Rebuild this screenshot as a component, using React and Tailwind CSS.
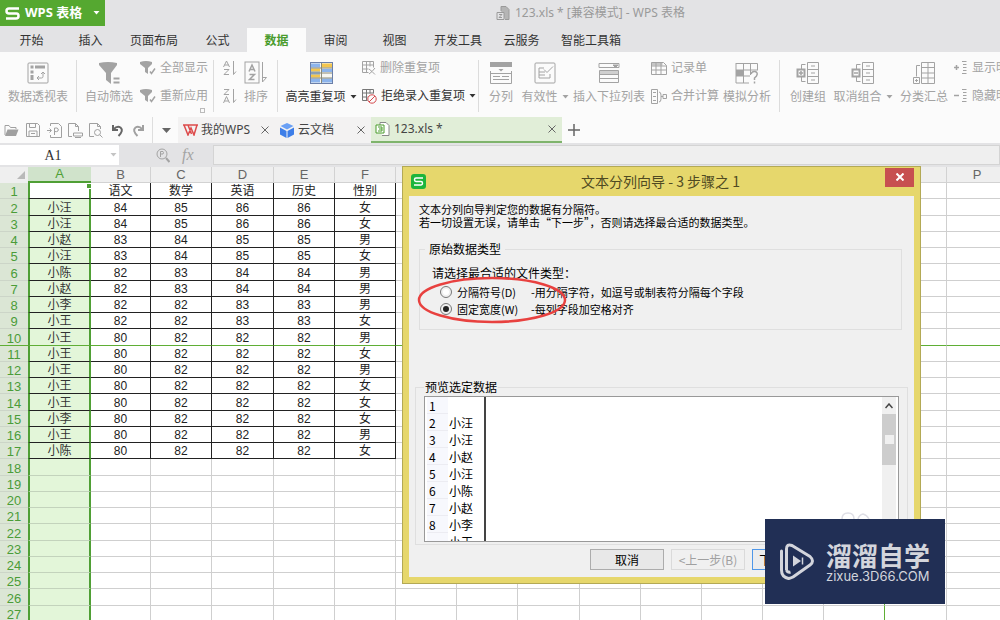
import React from "react";
import clsx from "clsx";

const MENU = ["开始", "插入", "页面布局", "公式", "数据", "审阅", "视图", "开发工具", "云服务", "智能工具箱"];

const COLUMNS = [
	{ name: "A", width: "w-[63px]" },
	{ name: "B", width: "w-[60px]" },
	{ name: "C", width: "w-[61px]" },
	{ name: "D", width: "w-[62px]" },
	{ name: "E", width: "w-[61px]" },
	{ name: "F", width: "w-[61px]" },
	{ name: "G", width: "w-[61px]" },
	{ name: "H", width: "w-[61px]" },
	{ name: "I", width: "w-[62px]" },
	{ name: "J", width: "w-[61px]" },
	{ name: "K", width: "w-[61px]" },
	{ name: "L", width: "w-[61px]" },
	{ name: "M", width: "w-[61px]" },
	{ name: "N", width: "w-[61px]" },
	{ name: "O", width: "w-[62px]" },
	{ name: "P", width: "w-[61px]" },
];

const DATA = [
	["", "语文", "数学", "英语", "历史", "性别"],
	["小汪", 84, 85, 86, 86, "女"],
	["小汪", 84, 85, 86, 86, "女"],
	["小赵", 83, 84, 85, 85, "男"],
	["小汪", 83, 84, 85, 85, "女"],
	["小陈", 82, 83, 84, 84, "男"],
	["小赵", 82, 83, 84, 84, "男"],
	["小李", 82, 82, 83, 83, "男"],
	["小王", 82, 82, 83, 83, "女"],
	["小王", 80, 82, 82, 82, "男"],
	["小王", 80, 82, 82, 82, "女"],
	["小王", 80, 82, 82, 82, "男"],
	["小王", 80, 82, 82, 82, "女"],
	["小王", 80, 82, 82, 82, "女"],
	["小李", 80, 82, 82, 82, "女"],
	["小王", 80, 82, 82, 82, "男"],
	["小陈", 80, 82, 82, 82, "女"],
];

const ROWS = Array.from({ length: 27 }, (_, i) => i + 1);

const Svg = ({ w, h, className, children }) => (
	<svg width={w} height={h} viewBox={`0 0 ${w} ${h}`} fill="none" stroke="currentColor" className={clsx("shrink-0", className)} aria-hidden="true">
		{children}
	</svg>
);

const Caret = ({ className }) => (
	<Svg w={7} h={4} className={className}>
		<path d="M0.5 0h6L3.5 3.5z" fill="currentColor" stroke="none" />
	</Svg>
);

const PivotIcon = () => (
	<Svg w={22} h={22}>
		<rect x="1" y="1" width="20" height="20" rx="1" />
		<path d="M3.5 5h3M8 5h10" strokeWidth="3" />
		<path d="M5 8.500v3M5 13v5" strokeWidth="3" />
		<path d="M10 16h4.500q1.500 0 1.500-1.500v-4M12 14l-2 2 2 2M14 12l2-2 2 2" />
	</Svg>
);

const FilterIcon = () => (
	<Svg w={22} h={22}>
		<path d="M1 1q9-2 18 0v2l-6 8v11l-5-4v-7L1 3z" fill="currentColor" stroke="none" />
		<path d="M15.500 16.500h6M15.500 20.500h6" strokeWidth="2" />
	</Svg>
);

const SmallFilterIcon = () => (
	<Svg w={16} h={14}>
		<path d="M0 1q6-2 12 0v2L8 7v6l-3-2V7L0 3z" fill="currentColor" stroke="none" />
		<path d="M10 10.500l1.500 2 3.500-5" strokeWidth="1.500" />
	</Svg>
);

const SortIcon = ({ desc }) => (
	<Svg w={16} h={16}>
		<path d={desc ? "M2 1.500h5l-5 5h5M1.500 15L4.500 8.500 7.500 15M2.500 13h4" : "M1.500 7L4.500 1l3 6M2.500 5h4M2 9.500h5l-5 5h5"} />
		<path d="M11.500 1v13.500l2.500-3" />
	</Svg>
);

const SortBoxIcon = () => (
	<Svg w={24} h={24}>
		<rect x="1" y="1" width="14" height="21" />
		<path d="M5 10.500L8 4l3 6.500M6 8.500h4M5.500 13.500h5l-5 5h5" strokeWidth="1.500" />
		<path d="M18.500 1v20l4-4.500h-4" />
	</Svg>
);

const HighlightIcon = () => (
	<Svg w={23} h={22}>
		<rect x="0.500" y="0.500" width="22" height="21" fill="#f7f7f2" stroke="#6b7fa8" />
		<path d="M1 3.500h9M12 18.500h10M1 18.500h9" stroke="#8cb4ec" strokeWidth="4" />
		<path d="M12 3.500h10M1 8.500h9M1 13.500h9" stroke="#f3c64f" strokeWidth="4" />
		<path d="M12 8.500h10M1 11h9" stroke="#8cb4ec" strokeWidth="3" />
		<path d="M11.500 1v20M1 6h21M1 11h21M1 16h21" stroke="#8a8a78" />
	</Svg>
);

const DedupIcon = () => (
	<Svg w={14} h={14}>
		<path d="M.5.500h11v6M.5.500v11h6M.5 4h11M.5 8h6M4.500.500v11M8 .5v5" />
		<path d="M7 8l3 2.500L7 13M13 7l-3 3.500 3 3" />
	</Svg>
);

const RejectIcon = () => (
	<Svg w={15} h={15}>
		<path d="M.5.500h11v4M.5.500v11h5M.5 4h11M.5 8h5M4.500.500v11M8 .5v4" stroke="#777" />
		<circle cx="10" cy="10" r="4.200" stroke="#d4494d" fill="#fbfbfb" />
		<path d="M7 13l6-6" stroke="#d4494d" />
	</Svg>
);

const SplitIcon = () => (
	<Svg w={22} h={22}>
		<path d="M0 2.500h22" strokeWidth="5" />
		<path d="M8.500 7h5L11 9.500z" fill="currentColor" stroke="none" />
		<path d="M.5 11.500h21v10H.5zM3 14.500h7M12 14.500h7M3 17.500h16M.5 9v3M21.500 9v3" />
	</Svg>
);

const ValidIcon = () => (
	<Svg w={22} h={22}>
		<rect x="1" y="1" width="20" height="20" rx="1" />
		<path d="M5 6h5M5 6v4h6M5 10v6h11M5 13h6M16 12v4M10 7.500l3 3 6-6" />
	</Svg>
);

const DropListIcon = () => (
	<Svg w={22} h={22}>
		<path d="M1 1.500h20v4M1 1.500v4h20" />
		<path d="M15 3h5l-2.500 2.500z" fill="currentColor" />
		<path d="M1.500 8.500h19v12h-19zM1.500 16.500h19M1.500 12.500h19" />
		<path d="M1.500 10.500h19" strokeWidth="3" opacity=".5" />
	</Svg>
);

const RecordIcon = () => (
	<Svg w={16} h={13}>
		<path d="M.5.500h12l3 3v9H.5zM.5 4h15M.5 8h15M5 .5v12M10 .5v12" />
		<path d="M.5 2h11" strokeWidth="3" opacity=".6" />
	</Svg>
);

const MergeIcon = () => (
	<Svg w={16} h={15}>
		<path d="M.5.500h6v14h-6zM2 3.500h3M2 7.500h3M2 11.500h3M8 3q2 0 2 3v4q0 3-2 3M10 7.500h2M12 5.500h3.500v4H12z" />
	</Svg>
);

const WhatIfIcon = () => (
	<Svg w={24} h={22}>
		<path d="M1 1.500h21.500v7M1 1v20h13M1 8h21M1 14h14M8.500 1v20M15.500 1v12" />
		<path d="M1 11h8" strokeWidth="6" />
		<path d="M16 12q1-3 4-2.500 3.500 1 1.500 4.500l-2 2v2M19.500 19.500v2" strokeWidth="1.500" />
	</Svg>
);

const GroupIcon = ({ minus }) => (
	<Svg w={24} h={22}>
		<path d="M11.500.500h11v21h-11zM11.500 7.500h11M11.500 14.500h11M15 4h4M15 11h4M15 18h4" />
		<path d="M9.500 2.500h-4v5M5.500 14v5.500h4" />
		<rect x="1.500" y="7.500" width="7" height="7" strokeWidth="2" />
		<path d={minus ? "M3 11h4" : "M3 11h4M5 9v4"} strokeWidth="1.500" />
	</Svg>
);

const SubtotalIcon = () => (
	<Svg w={24} h={22}>
		<path d="M9.500.500h13v21h-13zM9.500 5.500h13M9.500 11h13M9.500 16h13M16 .5v21" />
		<path d="M8 3.500H4.500v11M1.500 15.500h6v6h-6zM3 18.500h3M4.500 17v3" />
	</Svg>
);

const DetailIcon = ({ minus }) => (
	<Svg w={14} h={14}>
		<path d={minus ? "M0 6.500h5" : "M0 6.500h5M2.500 4v5"} strokeWidth="1.500" />
		<path d="M8 .5h4.500M9 3.500h3.500M9 6.500h3.500M9 9.500h3.500M8 12.500h4.500" />
	</Svg>
);

const BigTool = ({ icon, label, caret, dark, className }) => (
	<button type="button" className={clsx("flex flex-col items-center gap-1 whitespace-nowrap pt-px", dark ? "text-[#333]" : "text-[#a3a3a3]", className)}>
		<span className="flex h-6 items-center">{icon}</span>
		<span className="flex items-center gap-1 leading-4">
			{label}
			{caret && <Caret />}
		</span>
	</button>
);

const SmallTool = ({ icon, label, caret, dark }) => (
	<button type="button" className={clsx("flex h-4 items-center gap-1 whitespace-nowrap leading-4", dark ? "text-[#333]" : "text-[#a3a3a3]")}>
		{icon}
		{label}
		{caret && <Caret />}
	</button>
);

const Stack = ({ className, children }) => <div className={clsx("flex flex-col gap-3", className)}>{children}</div>;

const Ribbon = () => (
	<div className="flex h-[65px] shrink-0 overflow-hidden bg-[#fbfbfb] pt-2 text-[12px]">
		<div className="w-[77px] shrink-0 h-13 border-r border-[#dcdcdc]">
			<BigTool icon={<PivotIcon />} label="数据透视表" className="w-[76px]" />
		</div>
		<div className="relative flex w-[137px] shrink-0 h-13 border-r border-[#dcdcdc] pl-2">
			<BigTool icon={<FilterIcon />} label="自动筛选" className="w-12" />
			<Stack className="ml-[7px]">
				<SmallTool icon={<SmallFilterIcon />} label="全部显示" />
				<SmallTool icon={<SmallFilterIcon />} label="重新应用" />
			</Stack>
			<span className="absolute right-2 -bottom-px size-[5px] border border-[#bbb]" />
		</div>
		<div className="flex w-[64px] shrink-0 h-13 border-r border-[#dcdcdc] pl-2 text-[#a3a3a3]">
			<Stack>
				<button type="button" aria-label="升序"><SortIcon /></button>
				<button type="button" aria-label="降序"><SortIcon desc /></button>
			</Stack>
			<BigTool icon={<SortBoxIcon />} label="排序" className="w-9" />
		</div>
		<div className="flex w-[201px] shrink-0 h-13 border-r border-[#dcdcdc] pl-2">
			<BigTool icon={<HighlightIcon />} label="高亮重复项" caret dark className="w-[70px]" />
			<Stack className="ml-[6px]">
				<SmallTool icon={<DedupIcon />} label="删除重复项" />
				<SmallTool icon={<RejectIcon />} label="拒绝录入重复项" caret dark />
			</Stack>
		</div>
		<div className="flex w-[301px] shrink-0 h-13 border-r border-[#dcdcdc] pl-[10px]">
			<BigTool icon={<SplitIcon />} label="分列" className="w-6" />
			<BigTool icon={<ValidIcon />} label="有效性" caret className="ml-2 w-12" />
			<BigTool icon={<DropListIcon />} label="插入下拉列表" className="ml-1 w-[72px]" />
			<Stack className="ml-[6px]">
				<SmallTool icon={<RecordIcon />} label="记录单" />
				<SmallTool icon={<MergeIcon />} label="合并计算" />
			</Stack>
			<BigTool icon={<WhatIfIcon />} label="模拟分析" className="ml-1 w-12" />
		</div>
		<div className="flex shrink-0 h-13 pl-2">
			<BigTool icon={<GroupIcon />} label="创建组" className="ml-[2px] w-9" />
			<BigTool icon={<GroupIcon minus />} label="取消组合" caret className="ml-2 w-[58px]" />
			<BigTool icon={<SubtotalIcon />} label="分类汇总" className="ml-2 w-12" />
			<Stack className="ml-[6px]">
				<SmallTool icon={<DetailIcon />} label="显示明细数据" />
				<SmallTool icon={<DetailIcon minus />} label="隐藏明细数据" />
			</Stack>
		</div>
	</div>
);

const TitleBar = () => (
	<header className="flex h-[26px] shrink-0 text-[12px]">
		<button type="button" className="flex w-[105px] items-center bg-[#55a830] pl-[5px] text-[13px] font-bold text-white">
			<Svg w={15} h={13}>
				<path d="M14 1.500H4Q1.500 1.500 1.500 4t2.500 2.500h7.500Q13.500 6.500 13.500 9t-2.500 2.500H1" strokeWidth="2.500" />
			</Svg>
			<span className="ml-[5px] whitespace-nowrap">WPS 表格</span>
			<Caret className="ml-[11px]" />
		</button>
		<div className="flex flex-1 items-center justify-center gap-[5px] pl-[76px] text-[#9a9a9a]">
			<Svg w={14} h={14}>
				<path d="M5 5V.5h5l3 3v10H9" fill="#b5b5b5" />
				<path d="M1 6.500h7v7H1z" fill="#e3e3e5" />
				<path d="M3 8.500h3l-3 3h3" />
			</Svg>
			123.xls * [兼容模式] - WPS 表格
		</div>
	</header>
);

const MenuBar = () => (
	<nav className="flex h-[26px] shrink-0 items-end pl-[2px] text-[12px] text-[#333]">
		{MENU.map((item) => (
			<button
				key={item}
				type="button"
				className={clsx("h-6 min-w-[59px] whitespace-nowrap px-[10px] pt-[2px]", item === "数据" && "bg-[#fbfbfb] font-bold text-[#4a9c2d]")}
			>
				{item}
			</button>
		))}
	</nav>
);

const CloseMark = ({ label }) => (
	<button type="button" aria-label={label} className="text-[#666]">
		<Svg w={8} h={8}>
			<path d="M.5.500l7 7M7.500.500l-7 7" />
		</Svg>
	</button>
);

const QuickBar = () => (
	<div className="flex h-[26px] shrink-0 bg-[#fbfbfb] text-[12px] text-[#444]">
		<div className="flex w-[178px] shrink-0 items-center pl-1 text-[#a0a0a0]">
			<button type="button" aria-label="打开" className="w-[22px]">
				<Svg w={15} h={13}>
					<path d="M1 11V1.500h4l1.500 2H12V5" />
					<path d="M3.500 5.500H14.500L12 12H1z" fill="currentColor" stroke="none" />
				</Svg>
			</button>
			<button type="button" aria-label="保存" className="w-[21px]">
				<Svg w={14} h={14}>
					<path d="M.5.500h11l2 2v11H.5zM3.500.500v4h6v-4M3 13V8h8v5M5 10.500h4" />
				</Svg>
			</button>
			<button type="button" aria-label="输出为PDF" className="w-[21px]">
				<Svg w={16} h={15}>
					<path d="M3.500 3V.5h8l3 3v11h-11V12M0 7.500h4M2.500 5.500l2 2-2 2M7.500 12V5h2.500q2 .5 1 3-1 1-3.500.500" />
				</Svg>
			</button>
			<button type="button" aria-label="打印" className="w-[21px]">
				<Svg w={15} h={15}>
					<path d="M4 13.500H.5V.5h7l3 3V8M7.500.500v3h3M5.500 10h9v3h-9zM7 14.500h6" />
				</Svg>
			</button>
			<button type="button" aria-label="打印预览" className="w-[22px]">
				<Svg w={14} h={15}>
					<path d="M5 13.500H.5V.5h8l3 3V6M8.500.500v3h3M11 12l2.500 2.500" />
					<circle cx="8.500" cy="9.500" r="3" />
				</Svg>
			</button>
			<button type="button" aria-label="撤消" className="w-[21px] text-[#666]">
				<Svg w={13} h={13}>
					<path d="M2 1v5h5M2.500 5.500Q6 1.500 9.500 3.500q3.500 3-2 8.500" strokeWidth="2" />
				</Svg>
			</button>
			<button type="button" aria-label="恢复" className="w-[18px]">
				<Svg w={13} h={13}>
					<path d="M11 1v5H6M10.500 5.500Q7 1.500 3.500 3.500q-3.500 3 2 8.500" strokeWidth="2" />
				</Svg>
			</button>
			<button type="button" aria-label="更多" className="ml-[2px] flex h-full items-center border-l border-[#dedede] pl-[9px] text-[#666]">
				<Svg w={9} h={5}>
					<path d="M0 0h9L4.500 5z" fill="currentColor" stroke="none" />
				</Svg>
			</button>
		</div>
		<div className="flex w-[97px] shrink-0 items-center bg-[#f3f2f2] pl-[5px]">
			<Svg w={15} h={12}>
				<path d="M0 1h15M1 1l4 10 3-7 3 7 3-10M5 1l3.500 9" stroke="#dd4b4b" strokeWidth="1.500" />
			</Svg>
			<span className="mr-auto ml-[3px]">我的WPS</span>
			<span className="mr-[6px] flex"><CloseMark label="关闭我的WPS" /></span>
		</div>
		<div className="flex w-[96px] shrink-0 items-center bg-[#f3f2f2] pl-[5px]">
			<Svg w={14} h={15}>
				<path d="M7 0l6.500 3L7 6.500.5 3z" fill="#6aa0f5" stroke="none" />
				<path d="M0 4.500L6.500 8v7L0 11.500zM14 4.500L7.500 8v7l6.500-3.500z" fill="#3d7ee8" stroke="none" />
			</Svg>
			<span className="mr-auto ml-1">云文档</span>
			<span className="mr-[6px] flex"><CloseMark label="关闭云文档" /></span>
		</div>
		<div className="flex w-[191px] shrink-0 items-center border-b-2 border-[#7fb46c] bg-[#e1eed8] pl-1">
			<Svg w={15} h={14}>
				<path d="M5 3V.5h6l3 3v10H7" stroke="#888" fill="#fff" />
				<path d="M1 3h8v8H1z" fill="#fff" stroke="#4a9c2d" />
				<path d="M3 5h4v2H4M3 9h4V7" stroke="#4a9c2d" />
			</Svg>
			<span className="mr-auto ml-1">123.xls *</span>
			<span className="mr-[6px] flex"><CloseMark label="关闭123.xls" /></span>
		</div>
		<button type="button" aria-label="新建" className="ml-[6px] text-[#666]">
			<Svg w={12} h={12}>
				<path d="M6 0v12M0 6h12" strokeWidth="1.500" />
			</Svg>
		</button>
	</div>
);

const FormulaBar = () => (
	<div className="flex h-6 shrink-0 items-center bg-[#e3e3e5]">
		<div className="flex h-5 w-[119px] shrink-0 items-center bg-white">
			<input aria-label="名称框" defaultValue="A1" className="w-[106px] text-center font-['Liberation_Serif',serif] text-[14px] text-[#333] outline-none" />
			<Caret className="ml-1 text-[#c4c4c4]" />
		</div>
		<div className="flex w-[94px] shrink-0 items-center gap-3 pl-[37px] text-[#a3a3a3]">
			<Svg w={14} h={15}>
				<circle cx="6" cy="6" r="5" />
				<path d="M10 10l3.500 4" strokeWidth="2" />
				<path d="M4.500 9V3.500H7q1 1 0 2.500H4.500" />
			</Svg>
			<span className="font-['Liberation_Serif',serif] text-[16px] leading-4 italic">fx</span>
		</div>
		<input aria-label="编辑栏" className="h-5 min-w-0 flex-1 border border-[#d4d4d4] bg-[#efefef] outline-none" />
	</div>
);

const Sheet = () => (
	<table className="w-max table-fixed border-separate border-spacing-0 bg-white font-['Liberation_Sans','Noto_Sans_CJK_SC',sans-serif] text-[12px]">
		<colgroup>
			<col className="w-[28px]" />
			{COLUMNS.map((col) => (
				<col key={col.name} className={col.width} />
			))}
		</colgroup>
		<thead>
			<tr className="h-4 bg-[#efefef] text-[13px] leading-[14px] text-[#666]">
				<th className="p-0">
					<Svg w={8} h={8} className="ml-[17px]">
						<path d="M8 0v8H0z" fill="#b9b9b9" stroke="none" />
					</Svg>
				</th>
				{COLUMNS.map((col) => (
					<th
						key={col.name}
						className={clsx(
							"p-0 font-normal",
							col.name === "A" ? "border-b-2 border-[#4f9f35] bg-[#d0e3cb] text-[#4f9f35]" : "border-r border-b border-[#d2d2d2]"
						)}
					>
						{col.name}
					</th>
				))}
			</tr>
		</thead>
		<tbody>
			{ROWS.map((row) => {
				const guide = row === 10;
				const filled = row <= DATA.length;
				return (
					// every fourth row is one pixel taller
					<tr key={row} className={clsx("leading-[13px]", row % 4 === 2 ? "h-[17px]" : "h-4")}>
						<th className={clsx("border-b bg-[#dbe6d5] p-0 pt-[2px] text-[13px] font-normal text-[#4a9c38]", guide ? "border-[#5fae35]" : "border-[#ccd5c8]")}>
							{row}
						</th>
						{COLUMNS.map((col, i) => {
							if (i === 0) {
								return (
									<td
										key={col.name}
										className={clsx(
											"relative border-x-2 border-b border-x-[#4f9f35] p-0 pt-[2px] text-center text-[#333]",
											row === 1 ? "bg-white" : "bg-[#e3f6d9]",
											guide ? "border-b-[#5fae35]" : filled ? "border-b-[#222]" : "border-b-[#c3d3bc]"
										)}
									>
										{filled && DATA[row - 1][0]}
										{row === 1 && <span className="absolute top-0 -right-[3px] size-[6px] border border-white bg-[#4f9f35]" />}
									</td>
								);
							}
							const black = filled && i < 6;
							return (
								<td
									key={col.name}
									className={clsx(
										"border-r border-b p-0 pt-[2px] text-center text-[#222]",
										guide ? "border-b-[#5fae35]" : black ? "border-b-[#222]" : "border-b-[#cfcfcf]",
										col.name === "N" ? "border-r-[#5fae35]" : black ? "border-r-[#222]" : "border-r-[#cfcfcf]"
									)}
								>
									{black && DATA[row - 1][i]}
								</td>
							);
						})}
					</tr>
				);
			})}
		</tbody>
	</table>
);

const DIALOG_BUTTON = "h-[21px] w-[74px] border text-[12px] leading-[17px] whitespace-nowrap overflow-hidden";

const TypeOption = ({ id, label, hint, checked }) => (
	<div className="flex h-[17px] items-center whitespace-nowrap">
		<input
			id={id}
			type="radio"
			name="type"
			defaultChecked={checked}
			className="mr-[5px] size-3 appearance-none rounded-full border border-[#777] bg-white bg-clip-content p-[2px] checked:bg-[#222]"
		/>
		<label htmlFor={id} className="flex">
			<span className="w-[74px]">{label}</span>
			<span>{hint}</span>
		</label>
	</div>
);

const SplitDialog = () => (
	<section
		role="dialog"
		aria-labelledby="wizard-title"
		className="absolute top-[166px] left-[402px] w-[519px] border border-[#b3a955] bg-[#e6d76c] px-[6px] pb-[6px] font-['Noto_Sans_CJK_SC',sans-serif] text-black"
	>
		<div className="flex h-[29px] items-center pl-[2px]">
			<Svg w={15} h={15}>
				<rect width="15" height="15" rx="3" fill="#1db53c" stroke="none" />
				<path d="M12 4H5Q3.500 4 3.500 5.700T5 7.500h5q1.500 0 1.500 1.700T10 11H3" stroke="#fff" strokeWidth="1.500" />
			</Svg>
			<h2 id="wizard-title" className="flex-1 pl-[10px] text-center text-[14px] text-[#4f4a22]">文本分列向导 - 3 步骤之 1</h2>
			<button type="button" aria-label="关闭" className="mb-[9px] flex h-[19px] w-[29px] items-center justify-center bg-[#c75050] text-white">
				<Svg w={8} h={8}>
					<path d="M.5.500l7 7M7.500.500l-7 7" strokeWidth="2" />
				</Svg>
			</button>
		</div>
		<div className="relative bg-[#f0f0f0] pt-[7px] pb-[7px] text-[12px] leading-[13px]">
			<p className="px-[10px] text-[11px]">
				文本分列向导判定您的数据有分隔符。
				<br />
				若一切设置无误，请单击“下一步”，否则请选择最合适的数据类型。
			</p>
			<fieldset className="mt-[13px] mr-3 ml-[10px] border border-[#dfdfdf] px-[5px] pb-3 text-[11px] leading-[14px]">
				<legend className="px-1 text-[12px]">原始数据类型</legend>
				<p className="mt-[10px] ml-[7px] text-[12px]">请选择最合适的文件类型：</p>
				<div className="mt-[3px] ml-[15px]">
					<TypeOption id="by-delimiter" label="分隔符号(D)" hint="-用分隔字符，如逗号或制表符分隔每个字段" />
					<TypeOption id="by-width" label="固定宽度(W)" hint="-每列字段加空格对齐" checked />
				</div>
			</fieldset>
			<fieldset className="mx-[6px] mt-[50px] border border-[#dfdfdf] px-[8px] pb-[2px]">
				<legend className="px-px leading-[14px]">预览选定数据</legend>
				<div className="mt-[2px] flex h-[146px] overflow-hidden border border-[#999] bg-white pl-[2px]">
					<div className="h-36 w-[59px] shrink-0 overflow-hidden border-r-2 border-[#444]">
						<table className="w-full table-fixed border-separate border-spacing-0">
							<tbody>
								{DATA.slice(0, 9).map(([name], i) => (
									<tr key={i} className="h-[17px]">
										<th className="w-[21px] border-b border-[#ececf2] bg-[#f7f8fd] p-0 pl-[2px] text-left font-normal">{i < 8 && i + 1}</th>
										<td className="p-0 pl-px">{name}</td>
									</tr>
								))}
							</tbody>
						</table>
					</div>
					<div className="mr-[2px] ml-auto flex w-[14px] flex-col bg-[#f0f0f0]">
						<button type="button" aria-label="向上滚动" className="flex h-[17px] shrink-0 items-center justify-center text-[#444]">
							<Svg w={8} h={6}>
								<path d="M.5 5L4 1l3.500 4" strokeWidth="1.500" />
							</Svg>
						</button>
						<div className="flex h-[51px] shrink-0 items-center justify-center bg-[#cdcdcd]">
							<span className="size-[9px] bg-[#f0f0f0]" />
						</div>
					</div>
				</div>
			</fieldset>
			<div className="mt-1 flex justify-end gap-[7px] pr-[88px]">
				<button type="button" className={clsx(DIALOG_BUTTON, "border-[#acacac] bg-[#e8e8e8]")}>取消</button>
				<button type="button" disabled className={clsx(DIALOG_BUTTON, "border-[#dadada] bg-[#f0f0f0] text-[#a0a0a0]")}>&lt;上一步(B)</button>
				<button type="button" className={clsx(DIALOG_BUTTON, "border-[#4f97e8] bg-[#ececec]")}>下一步(N)&gt;</button>
			</div>
			<svg className="pointer-events-none absolute top-[79px] left-[8px]" width="152" height="50" viewBox="0 0 152 50" fill="none" aria-hidden="true">
				<ellipse cx="75" cy="25" rx="73" ry="22" stroke="#e8413f" strokeWidth="2.500" />
			</svg>
		</div>
	</section>
);

const Watermark = () => (
	<aside className="absolute top-[519px] left-[765px] flex h-[85px] w-[180px] items-center bg-[#212f55] pl-[15px] text-[#d3d5dc]">
		<Svg w={34} h={37}>
			<path d="M1.500 8v19q0 7 7 8.500" strokeWidth="3" strokeLinecap="round" />
			<path d="M6.500 27V6q0-5.500 5.500-3.500l18 11q5 4.500 0 8.500l-17 12q-3 1.500-5 1.500M6.500 27q1 3 4 2" strokeWidth="3" strokeLinejoin="round" />
			<path d="M13 12.500l8 5.500-8 5.500z" fill="currentColor" stroke="none" />
			<path d="M22.500 14.500v7" strokeWidth="1.500" />
		</Svg>
		<div className="ml-3 whitespace-nowrap">
			<div className="font-['Noto_Sans_CJK_SC',sans-serif] text-[26px] leading-7 font-bold">溜溜自学</div>
			<div className="font-['Inter',sans-serif] text-[13px] leading-[14px]">zixue.3D66.COM</div>
		</div>
		<svg className="absolute -top-[7px] left-[75px]" width="32" height="7" viewBox="0 0 32 7" fill="none" stroke="#dfdfe6" strokeWidth="1.500" aria-hidden="true">
			<path d="M2 7q0-6 6-6t6 6M18 7q1-4 5-5 4 1 6 5" />
		</svg>
	</aside>
);

export default function App() {
	return (
		<main lang="zh-CN" className="relative flex h-screen flex-col overflow-hidden bg-[#e3e3e5] font-['Noto_Sans','Noto_Sans_CJK_SC',sans-serif]">
			<TitleBar />
			<MenuBar />
			<Ribbon />
			<QuickBar />
			<FormulaBar />
			<div className="min-h-0 flex-1 overflow-hidden bg-white">
				<Sheet />
			</div>
			<SplitDialog />
			<Watermark />
		</main>
	);
}
